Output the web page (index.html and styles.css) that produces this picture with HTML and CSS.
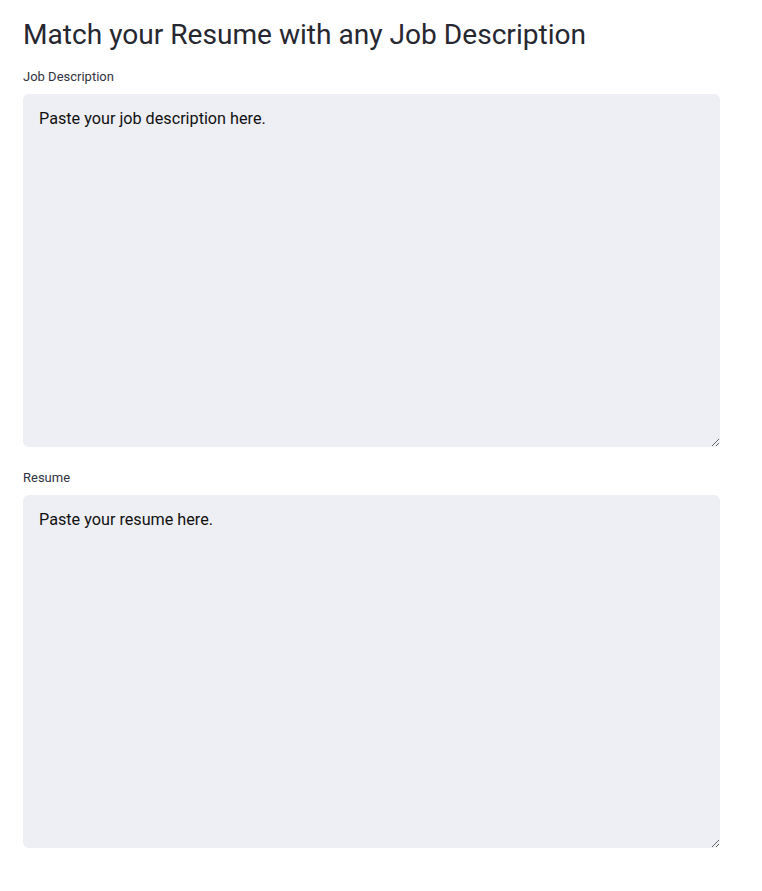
FILE: index.html
```html
<!DOCTYPE html>
<html lang="en">
<head>
<meta charset="utf-8">
<title>Match your Resume with any Job Description</title>
<link rel="stylesheet" href="styles.css">
</head>
<body>
<main class="page">
  <h1 class="title">Match your Resume with any Job Description</h1>
  <div class="field">
    <label class="label" for="jd">Job Description</label>
    <textarea id="jd" class="area">Paste your job description here.</textarea>
  </div>
  <div class="field">
    <label class="label" for="cv">Resume</label>
    <textarea id="cv" class="area">Paste your resume here.</textarea>
  </div>
</main>
</body>
</html>
```
FILE: styles.css
```css
html, body {
  margin: 0;
  padding: 0;
  background: #ffffff;
}
.page {
  width: 697px;
  padding: 15px 0 0 23px;
  display: flex;
  flex-direction: column;
  font-family: Roboto, "Noto Sans", sans-serif;
  color: #262730;
}
.title {
  margin: 0;
  font-size: 28.1px;
  font-weight: 400;
  line-height: 40px;
  color: #262730;
}
.field {
  display: flex;
  flex-direction: column;
  margin-top: 14px;
}
.field + .field {
  margin-top: 23px;
}
.label {
  font-size: 13px;
  line-height: 16px;
  margin-bottom: 9px;
  color: #31333f;
}
.area {
  box-sizing: border-box;
  width: 697px;
  height: 353px;
  margin: 0;
  padding: 13px 16px 12px;
  border: none;
  border-radius: 6px;
  background: #eeeff4;
  font-family: Roboto, "Noto Sans", sans-serif;
  font-size: 16.2px;
  line-height: 24px;
  color: #111111;
  resize: vertical;
  outline: none;
}
```
